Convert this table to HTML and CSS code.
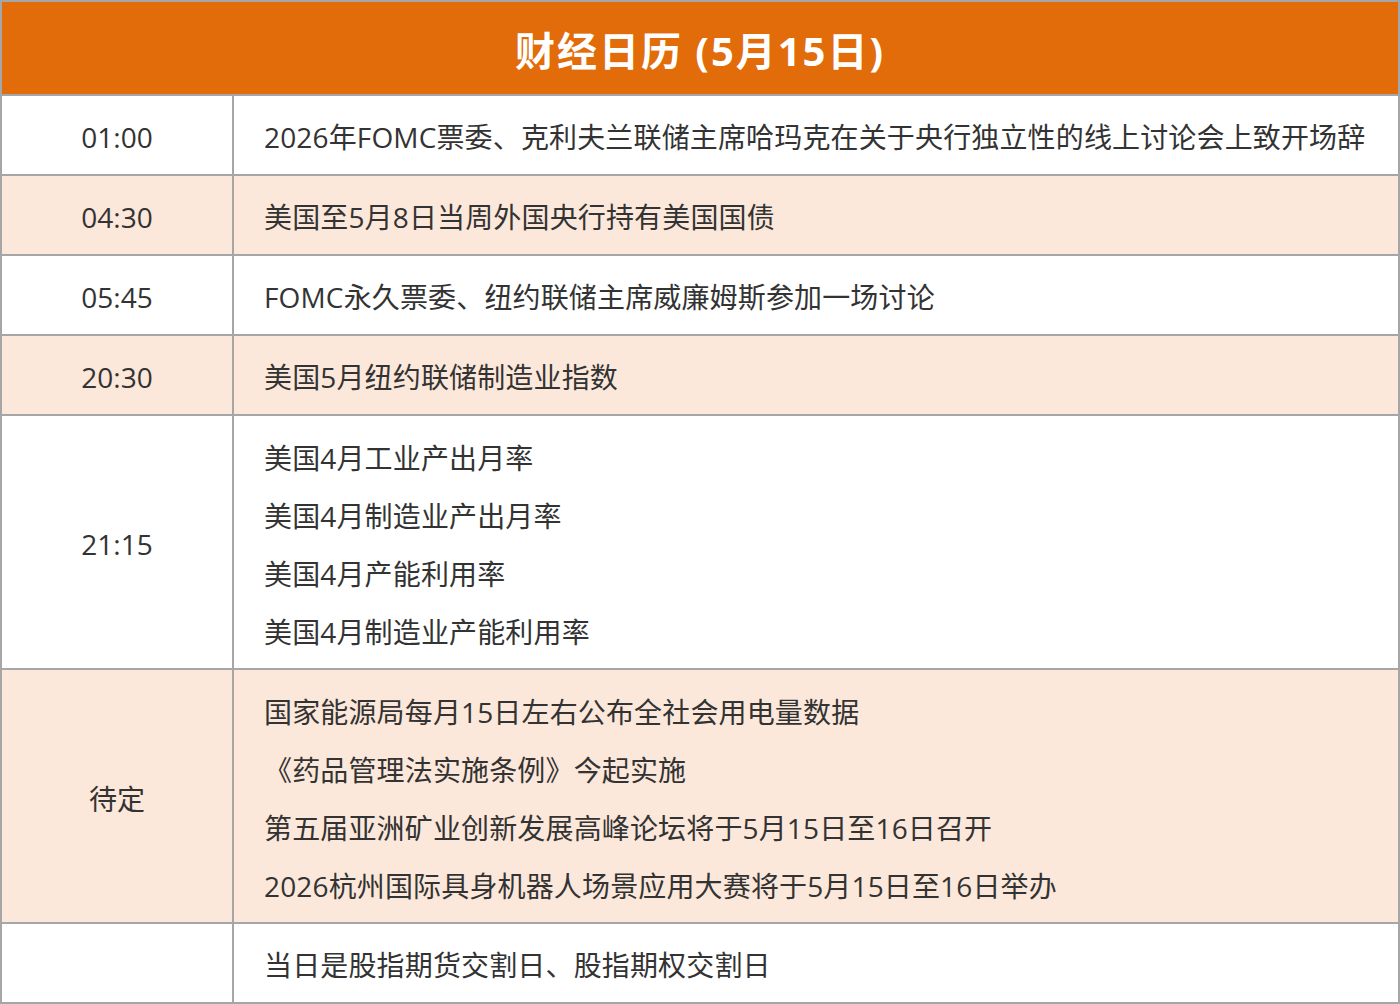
FILE: index.html
```html
<!DOCTYPE html>
<html lang="zh-CN">
<head>
<meta charset="utf-8">
<title>财经日历 (5月15日)</title>
<link rel="stylesheet" href="styles.css">
</head>
<body>
<div class="calendar">
  <div class="title">财经日历 (5月15日)</div>

  <div class="time">01:00</div>
  <div class="events"><div class="ev">2026年FOMC票委、克利夫兰联储主席哈玛克在关于央行独立性的线上讨论会上致开场辞</div></div>

  <div class="time alt">04:30</div>
  <div class="events alt"><div class="ev">美国至5月8日当周外国央行持有美国国债</div></div>

  <div class="time">05:45</div>
  <div class="events"><div class="ev">FOMC永久票委、纽约联储主席威廉姆斯参加一场讨论</div></div>

  <div class="time alt">20:30</div>
  <div class="events alt"><div class="ev">美国5月纽约联储制造业指数</div></div>

  <div class="time">21:15</div>
  <div class="events multi">
    <div class="ev">美国4月工业产出月率</div>
    <div class="ev">美国4月制造业产出月率</div>
    <div class="ev">美国4月产能利用率</div>
    <div class="ev">美国4月制造业产能利用率</div>
  </div>

  <div class="time alt">待定</div>
  <div class="events multi alt">
    <div class="ev">国家能源局每月15日左右公布全社会用电量数据</div>
    <div class="ev">《药品管理法实施条例》今起实施</div>
    <div class="ev">第五届亚洲矿业创新发展高峰论坛将于5月15日至16日召开</div>
    <div class="ev">2026杭州国际具身机器人场景应用大赛将于5月15日至16日举办</div>
  </div>

  <div class="time"></div>
  <div class="events"><div class="ev">当日是股指期货交割日、股指期权交割日</div></div>
</div>
</body>
</html>
```

FILE: styles.css
```css
* { box-sizing: border-box; }
html, body { margin: 0; padding: 0; background: #ffffff; }
body {
  font-family: "Open Sans", "Noto Sans CJK SC", sans-serif;
  color: #333333;
}
.calendar {
  width: 1400px;
  display: grid;
  grid-template-columns: 232px 1166px;
  border-top: 2px solid #a6a6a6;
  border-left: 2px solid #a6a6a6;
}
.title {
  grid-column: 1 / 3;
  height: 94px;
  background: #e26b0a;
  color: #ffffff;
  font-weight: 700;
  font-size: 40px;
  letter-spacing: 2px;
  display: flex;
  align-items: center;
  justify-content: center;
  padding-top: 2px;
  border-right: 2px solid #a6a6a6;
  border-bottom: 2px solid #a6a6a6;
}
.time, .events {
  border-right: 2px solid #a6a6a6;
  border-bottom: 2px solid #a6a6a6;
  min-height: 80px;
  font-size: 28px;
  padding-top: 3px;
}
.time {
  display: flex;
  align-items: center;
  justify-content: center;
}
.events {
  display: flex;
  flex-direction: column;
  justify-content: center;
  padding-left: 30px;
}
.events.multi {
  height: 254px;
  padding-top: 14px;
  padding-bottom: 8px;
}
.ev {
  line-height: 58px;
  white-space: nowrap;
  letter-spacing: 0.15px;
}
.alt { background: #fce8da; }
```
